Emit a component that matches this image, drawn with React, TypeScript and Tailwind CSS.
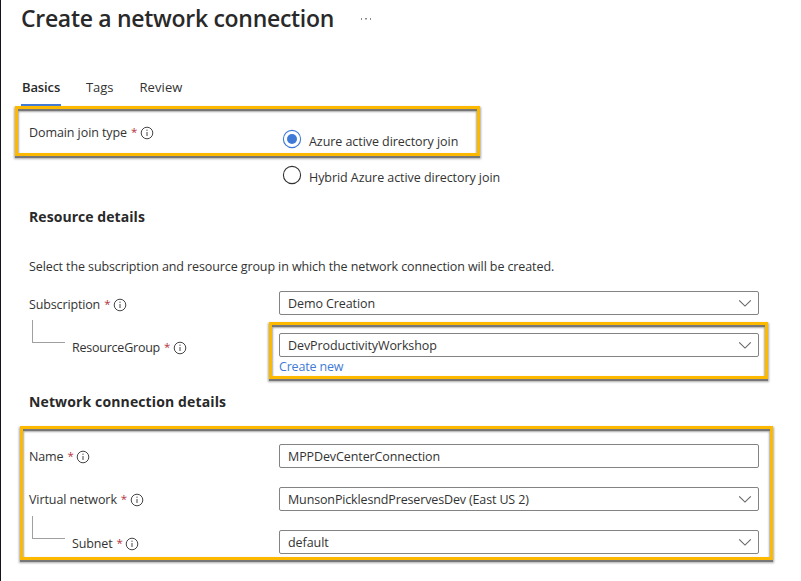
import type { ReactNode } from "react";

function InfoIcon() {
  return (
    <svg className="block h-[14px] w-[14px] shrink-0" viewBox="0 0 14 14" fill="none">
      <circle cx="7" cy="7" r="5.8" stroke="#454545" strokeWidth="1" />
      <path d="M7 6v4" stroke="#454545" strokeWidth="1" />
      <circle cx="7" cy="4.2" r="0.65" fill="#454545" />
    </svg>
  );
}

function Label({ children, tracking = "tracking-[-0.14px]" }: { children: ReactNode; tracking?: string }) {
  return (
    <div className="flex h-5 items-center leading-5">
      <span className={`pt-[2px] ${tracking}`}>{children}</span>
      <span className="ml-[4px] w-[9px] pb-px text-[11.5px] text-[#b5323b]">*</span>
      <span className="pt-[2px]">
        <InfoIcon />
      </span>
    </div>
  );
}

function Field({ value, select = true, tracking }: { value: string; select?: boolean; tracking: string }) {
  return (
    <div className="flex h-6 w-[480px] items-center justify-between rounded-[2px] border border-[#838383] pr-[6px] pl-2 leading-[22px]">
      <span className={`pt-[2px] ${tracking}`}>{value}</span>
      {select && (
        <svg className="h-2 w-[13px]" viewBox="0 0 13 8" fill="none">
          <path d="M0.2 1.4 6 7.1 11.8 1.4" stroke="#666" strokeWidth="1.1" />
        </svg>
      )}
    </div>
  );
}

function Radio({ label, checked = false }: { label: string; checked?: boolean }) {
  return (
    <div className="flex h-9 items-start">
      <svg className="h-5 w-5 shrink-0" viewBox="0 0 20 20" fill="none">
        <circle cx="10" cy="10" r="8.6" stroke={checked ? "#3f7ad6" : "#333"} strokeWidth="1.1" />
        {checked && <circle cx="10" cy="10" r="5" fill="#3f7ad6" />}
      </svg>
      <span className="mt-[3px] ml-[7px] leading-5 tracking-[-0.06px]">{label}</span>
    </div>
  );
}

function Connector() {
  return <div className="ml-[3px] h-[23px] w-[33px] border-b border-l border-[#a0a0a0]" />;
}

function Highlight({ place }: { place: string }) {
  return (
    <div
      className={`pointer-events-none absolute border-[3px] border-[#fdb800] shadow-[0_2px_0_#777,0_2px_2px_1px_#aaa,inset_0_2px_0_#777,inset_0_2px_2px_1px_#aaa] ${place}`}
    />
  );
}

export default function App() {
  return (
    <div className="relative h-[581px] w-[801px] overflow-hidden border-l border-[#16131f] bg-white font-['Open_Sans','Noto_Sans',sans-serif] text-[12.5px] text-[#333]">
      <header className="flex h-[34px] items-start pt-[2px] pl-5">
        <h1 className="w-[339px] text-[23px] leading-8 font-semibold tracking-[-0.3px] whitespace-nowrap text-[#292929]">
          Create a network connection
        </h1>
        <svg className="mt-4 h-[2px] w-[12px]" viewBox="0 0 12 2" fill="#8c8c8c">
          <rect x="1" width="1" height="2" />
          <rect x="5" width="2" height="1.5" />
          <rect x="10" width="1" height="2" />
        </svg>
      </header>

      <nav className="mt-[43px] flex h-[29px] pl-5 text-[13px] leading-5">
        <div className="h-[29px] w-10 border-b-2 border-[#3f7ad6] pl-px font-semibold tracking-[-0.12px] text-[#292929]">Basics</div>
        <div className="ml-[25px] tracking-[-0.05px]">Tags</div>
        <div className="ml-[26px] tracking-[0.1px]">Review</div>
      </nav>

      <main className="pl-7">
        <div className="flex h-[101px]">
          <div className="w-[253px] pt-4">
            <Label tracking="tracking-[-0.08px]">Domain join type</Label>
          </div>
          <div className="pt-[23px]">
            <Radio label="Azure active directory join" checked />
            <Radio label="Hybrid Azure active directory join" />
          </div>
        </div>

        <h2 className="text-[14px] leading-5 font-bold tracking-[0.06px] text-[#292929]">Resource details</h2>
        <p className="mt-[30px] h-5 leading-5 tracking-[-0.1px] whitespace-nowrap">
          Select the subscription and resource group in which the network connection will be created.
        </p>

        <div className="mt-[14px] flex h-[42px]">
          <div className="w-[250px] pt-[3px]">
            <Label>Subscription</Label>
            <div className="mt-[6px]">
              <Connector />
            </div>
          </div>
          <Field value="Demo Creation" tracking="tracking-[-0.09px]" />
        </div>
        <div className="flex h-[59px]">
          <div className="w-[250px] pt-1 pl-[43px]">
            <Label tracking="tracking-[-0.23px]">ResourceGroup</Label>
          </div>
          <div>
            <Field value="DevProductivityWorkshop" tracking="tracking-[-0.1px]" />
            <a className="block h-5 leading-5 tracking-[-0.18px] text-[#3f7ad6]">Create new</a>
          </div>
        </div>

        <h2 className="text-[14px] leading-5 font-bold tracking-[0.13px] text-[#292929]">Network connection details</h2>

        <div className="mt-8 flex h-[43px]">
          <div className="w-[250px] pt-[2px]">
            <Label>Name</Label>
          </div>
          <Field value="MPPDevCenterConnection" select={false} tracking="tracking-[-0.1px]" />
        </div>
        <div className="flex h-[43px]">
          <div className="w-[250px] pt-[2px]">
            <Label tracking="tracking-[-0.09px]">Virtual network</Label>
            <div className="mt-[7px]">
              <Connector />
            </div>
          </div>
          <Field value="MunsonPicklesndPreservesDev (East US 2)" tracking="tracking-[-0.14px]" />
        </div>
        <div className="flex h-6">
          <div className="w-[250px] pt-[3px] pl-[43px]">
            <Label>Subnet</Label>
          </div>
          <Field value="default" tracking="tracking-[-0.05px]" />
        </div>
      </main>

      <Highlight place="left-[14px] top-[106px] h-[50px] w-[465px]" />
      <Highlight place="left-[268px] top-[322px] h-[57px] w-[499px]" />
      <Highlight place="left-[19px] top-[426px] h-[134px] w-[753px]" />
    </div>
  );
}
